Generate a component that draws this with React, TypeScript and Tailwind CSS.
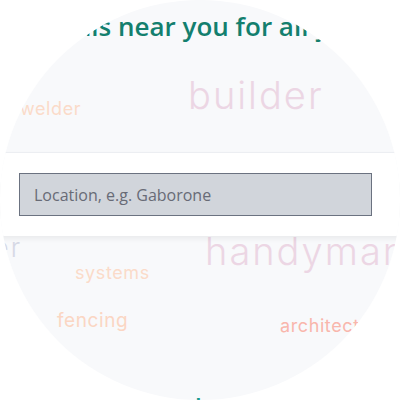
import React from "react";

const big = "font-['Inter',sans-serif] font-light leading-none whitespace-nowrap absolute tracking-[2px]";
const small = "font-['Inter',sans-serif] font-normal leading-none whitespace-nowrap absolute tracking-[0.6px]";

export default function App() {
  return (
    <div className="w-[400px] h-[400px] bg-white">
      <div className="w-[400px] h-[400px] rounded-full overflow-hidden bg-[#f8f9fb] flex flex-col">
        <div className="h-[48px] shrink-0 pt-[10px] flex font-['Open_Sans',sans-serif] font-semibold text-[26px] leading-[32px] text-[#137f6e] whitespace-nowrap">
          <span className="w-[118px] shrink-0 flex justify-end">Find professionals&nbsp;</span>
          <span>near you for all your jobs</span>
        </div>
        <div className="relative h-[104px] shrink-0">
          <span className={`${big} left-[188px] top-[28px] text-[38px] text-[#ecd6e4]`}>builder</span>
          <span className={`${small} left-[20px] top-[52px] text-[18px] text-[#fbdbc9]`}>welder</span>
        </div>
        <div className="relative z-10 h-[84px] shrink-0 bg-white border-t border-[#eceef2] shadow-[0_3px_5px_rgba(0,0,0,0.06)] pl-[19px] pr-[28px] pt-[20px]">
          <div className="h-[43px] bg-[#d1d5db] border border-[#6b7280] flex items-center pl-[14px] font-['Open_Sans',sans-serif] text-[16px] text-[#686b76]">
            Location, e.g. Gaborone
          </div>
        </div>
        <div className="relative flex-1">
          <span className={`${big} right-[378px] top-[-1px] text-[26px] text-[#d6d8e5]`}>plumber</span>
          <span className={`${big} left-[205px] top-[-4px] text-[38px] text-[#ecd6e4]`}>handyman</span>
          <span className={`${small} left-[75px] top-[28px] text-[18px] text-[#fbdbc9]`}>systems</span>
          <span className={`${small} left-[57px] top-[75px] text-[19px] text-[#fbd6c3]`}>fencing</span>
          <span className={`${small} left-[280px] top-[81px] text-[18px] text-[#f9b6ac]`}>architect</span>
          <span className="absolute left-[195px] top-[159px] font-['Open_Sans',sans-serif] font-semibold text-[24px] leading-none text-[#1a9a8a]">l</span>
        </div>
      </div>
    </div>
  );
}
